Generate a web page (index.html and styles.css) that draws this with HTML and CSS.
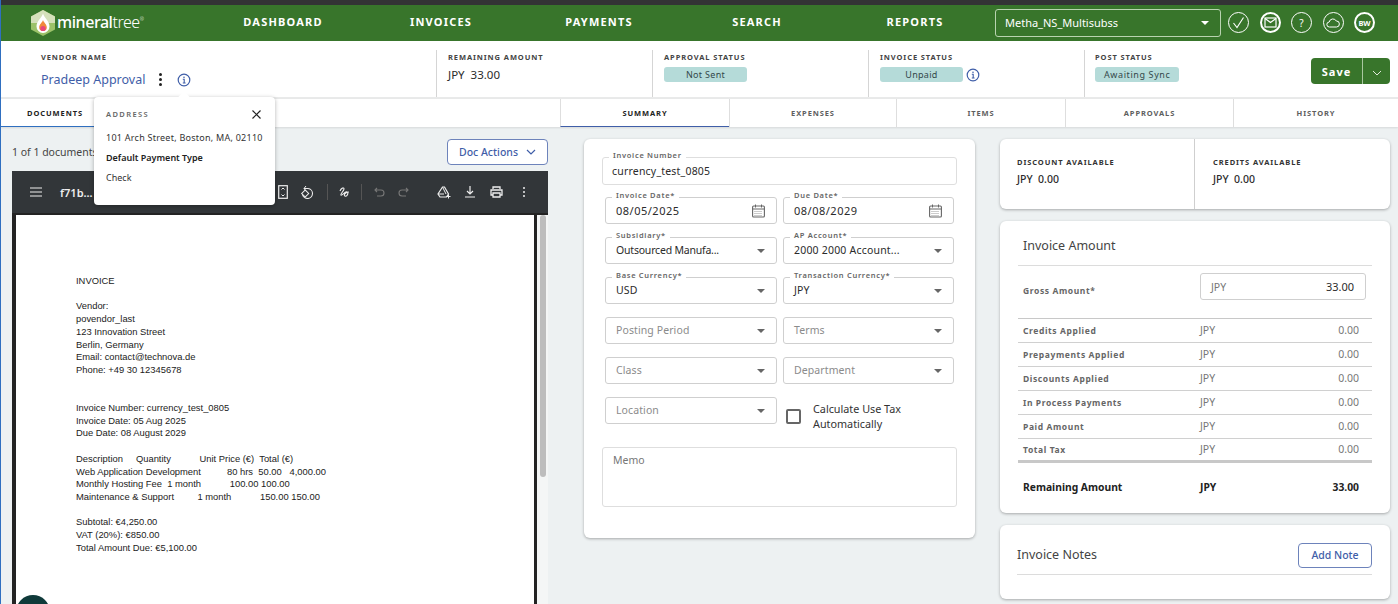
FILE: index.html
```html
<!DOCTYPE html>
<html lang="en">
<head>
    <meta charset="UTF-8">
    <meta name="viewport" content="width=device-width, initial-scale=1.0">
    <title>MineralTree Invoice</title>
    <link rel="stylesheet" href="styles.css">
</head>
<body>
    <div class="page">
        <div class="top-strip"></div>

        <div class="header">
            <div class="logo">
                <svg class="logo-mark" width="28" height="28" viewBox="0 0 28 28">
                    <path d="M14 1l12 6.5v13L14 27 2 20.5v-13z" fill="#9cc26a"/>
                    <path d="M14 1l12 6.5v6.5H2V7.5z" fill="#d5e0bb"/>
                    <path d="M14 4.5c1 4 6.5 7.5 6.5 13a6.5 6.5 0 0 1-13 0c0-5.5 5.5-9 6.5-13z" fill="#fff"/>
                    <path d="M14 11c.6 2.500 3.800 4.200 3.800 7.200a3.800 3.800 0 0 1-7.600 0c0-3 3.200-4.700 3.800-7.200z" fill="#f08a3c"/>
                    <circle cx="14" cy="19.5" r="2.600" fill="#e8467c"/>
                </svg>
                <span class="logo-text"><b>mineral</b>tree<sup>®</sup></span>
            </div>
            <nav class="nav">
                <a class="nav-item">DASHBOARD</a>
                <a class="nav-item">INVOICES</a>
                <a class="nav-item">PAYMENTS</a>
                <a class="nav-item">SEARCH</a>
                <a class="nav-item">REPORTS</a>
            </nav>
            <div class="org-select">
                <span>Metha_NS_Multisubss</span>
                <span class="caret caret-white"></span>
            </div>
            <div class="header-icons">
                <span class="round-icon">
                    <svg width="13" height="13" viewBox="0 0 13 13"><path d="M1.500 7l3.500 4.500L11.500 1.500" fill="none" stroke="#fff" stroke-width="1.100"/></svg>
                </span>
                <span class="round-icon round-icon-thick">
                    <svg width="13" height="11" viewBox="0 0 13 11"><rect x="1" y="1" width="11" height="9" fill="none" stroke="#fff" stroke-width="1.200"/><path d="M1 1.500l5.500 4 5.500-4" fill="none" stroke="#fff" stroke-width="1.200"/></svg>
                </span>
                <span class="round-icon">?</span>
                <span class="round-icon">
                    <svg width="14" height="10" viewBox="0 0 14 10"><path d="M3.500 9a2.500 2.500 0 0 1-.3-5A3.800 3.800 0 0 1 10.300 3a3 3 0 0 1 .2 6z" fill="none" stroke="#fff" stroke-width="1"/></svg>
                </span>
                <span class="round-icon round-icon-thick round-icon-text">BW</span>
            </div>
        </div>

        <div class="info-bar">
            <div class="info-vendor">
                <div class="info-label">VENDOR NAME</div>
                <div class="vendor-row">
                    <a class="vendor-link">Pradeep Approval</a>
                    <span class="kebab"><i></i><i></i><i></i></span>
                    <svg class="info-icon" width="14" height="14" viewBox="0 0 14 14"><circle cx="7" cy="7" r="5.800" fill="none" stroke="#3f5ea8" stroke-width="1.200"/><path d="M5.800 6.200H7.200V10M5.800 10h2.800" fill="none" stroke="#3f5ea8" stroke-width="1.100"/><circle cx="7" cy="4.200" r=".8" fill="#3f5ea8"/></svg>
                </div>
            </div>
            <div class="info-cell">
                <div class="info-label">REMAINING AMOUNT</div>
                <div class="info-value">JPY&nbsp; 33.00</div>
            </div>
            <div class="info-cell">
                <div class="info-label">APPROVAL STATUS</div>
                <div class="badge-row"><span class="badge badge-wide">Not Sent</span></div>
            </div>
            <div class="info-cell">
                <div class="info-label">INVOICE STATUS</div>
                <div class="badge-row">
                    <span class="badge badge-wide">Unpaid</span>
                    <svg class="info-icon" width="14" height="14" viewBox="0 0 14 14"><circle cx="7" cy="7" r="5.800" fill="none" stroke="#3f5ea8" stroke-width="1.200"/><path d="M5.800 6.200H7.200V10M5.800 10h2.800" fill="none" stroke="#3f5ea8" stroke-width="1.100"/><circle cx="7" cy="4.200" r=".8" fill="#3f5ea8"/></svg>
                </div>
            </div>
            <div class="info-cell info-cell-post">
                <div class="info-label">POST STATUS</div>
                <div class="badge-row"><span class="badge badge-post">Awaiting Sync</span></div>
            </div>
            <div class="save-group">
                <button class="save-btn">Save</button>
                <button class="save-more">
                    <svg width="10" height="6" viewBox="0 0 10 6"><path d="M1 1l4 4 4-4" fill="none" stroke="#dfe9da" stroke-width="1"/></svg>
                </button>
            </div>
        </div>

        <div class="tabs">
            <div class="tabs-left">
                <div class="tab tab-docs">DOCUMENTS</div>
            </div>
            <div class="tabs-right">
                <div class="tab tab-active">SUMMARY</div>
                <div class="tab">EXPENSES</div>
                <div class="tab">ITEMS</div>
                <div class="tab">APPROVALS</div>
                <div class="tab">HISTORY</div>
            </div>
        </div>

        <div class="main">
            <div class="doc-pane">
                <div class="doc-head">
                    <span class="doc-count">1 of 1 documents</span>
                    <button class="outline-btn doc-actions">Doc Actions
                        <svg width="10" height="6" viewBox="0 0 10 6"><path d="M1 1l4 4 4-4" fill="none" stroke="#3f5ea8" stroke-width="1.200"/></svg>
                    </button>
                </div>
                <div class="viewer">
                    <div class="viewer-bar">
                        <svg class="vb-menu" width="12" height="10" viewBox="0 0 12 10"><path d="M0 1h12M0 5h12M0 9h12" stroke="#eee" stroke-width="1.200"/></svg>
                        <span class="vb-title">f71b...</span>
                        <svg class="vb-fit" width="10" height="14" viewBox="0 0 10 14"><rect x=".7" y=".7" width="8.600" height="12.600" fill="none" stroke="#eee" stroke-width="1.200"/><path d="M3.500 4.500L5 3l1.500 1.500M3.500 9.500L5 11l1.500-1.500" fill="none" stroke="#eee"/></svg>
                        <svg class="vb-rotate" width="14" height="14" viewBox="0 0 14 14"><path d="M4 3.500h4a5 5 0 1 1-5.500 5" fill="none" stroke="#eee" stroke-width="1.100"/><path d="M6 1L4 3.500 6 6" fill="none" stroke="#eee"/><rect x="2.700" y="6" width="5" height="5" transform="rotate(45 5.200 8.500)" fill="#323639" stroke="#eee"/></svg>
                        <span class="vb-sep vb-sep-one"></span>
                        <svg class="vb-draw" width="12" height="13" viewBox="0 0 12 13"><path d="M1 5c1-3 4-4 4-2S1 8 2 9s4-4 6-3 0 5-2 4 1-4 4-4" fill="none" stroke="#eee" stroke-width="1.100"/></svg>
                        <span class="vb-sep vb-sep-two"></span>
                        <svg class="vb-undo" width="11" height="10" viewBox="0 0 11 10"><path d="M3 1L1 3l2 2M1 3h6a3 3 0 0 1 0 6H3" fill="none" stroke="#777" stroke-width="1.100"/></svg>
                        <svg class="vb-redo" width="11" height="10" viewBox="0 0 11 10"><path d="M8 1l2 2-2 2M10 3H4a3 3 0 0 0 0 6h4" fill="none" stroke="#777" stroke-width="1.100"/></svg>
                        <svg class="vb-drive" width="14" height="13" viewBox="0 0 14 13"><path d="M5.500 1h2l4 7-2 3H3L1 8z" fill="none" stroke="#eee" stroke-width="1.200"/><path d="M1 8h6M5.500 1L9 8" fill="none" stroke="#eee"/><path d="M9.500 10.500h4M11.500 8.500v4" stroke="#eee"/></svg>
                        <svg class="vb-down" width="10" height="12" viewBox="0 0 10 12"><path d="M5 0v8M2 5l3 3 3-3M0 11h10" fill="none" stroke="#eee" stroke-width="1.200"/></svg>
                        <svg class="vb-print" width="13" height="12" viewBox="0 0 13 12"><path d="M3 3V1h7v2M3 9H1V4h11v5h-2M3 7h7v4H3z" fill="none" stroke="#eee" stroke-width="1.300"/></svg>
                        <span class="vb-kebab"><i></i><i></i><i></i></span>
                    </div>
                    <div class="viewer-body">
                        <div class="pdf-page">
<div class="pdf-text">INVOICE

Vendor:
povendor_last
123 Innovation Street
Berlin, Germany
Email: contact@technova.de
Phone: +49 30 12345678


Invoice Number: currency_test_0805
Invoice Date: 05 Aug 2025
Due Date: 08 August 2029

Description     Quantity           Unit Price (€)  Total (€)
Web Application Development          80 hrs  50.00   4,000.00
Monthly Hosting Fee  1 month           100.00 100.00
Maintenance &amp; Support         1 month           150.00 150.00

Subtotal: €4,250.00
VAT (20%): €850.00
Total Amount Due: €5,100.00</div>
                        </div>
                        <div class="pdf-scroll"><div class="pdf-thumb"></div></div>
                    </div>
                </div>
            </div>

            <div class="form-col">
                <div class="card form-card">
                    <div class="field field-full">
                        <label class="field-label">Invoice Number</label>
                        <span class="field-value field-wide">currency_test_0805</span>
                    </div>
                    <div class="form-grid">
                        <div class="field">
                            <label class="field-label">Invoice Date*</label>
                            <span class="field-value field-date">08/05/2025</span>
                            <svg class="cal" width="13" height="14" viewBox="0 0 13 14"><rect x=".6" y="2" width="11.800" height="11" rx="1" fill="none" stroke="#666" stroke-width="1.100"/><path d="M.6 5h11.800M3.500 .5v3M9.500 .5v3" stroke="#666"/><path d="M2.500 7.500h8M2.500 9.500h8M2.500 11.500h8" stroke="#999" stroke-dasharray="1 1"/></svg>
                        </div>
                        <div class="field">
                            <label class="field-label">Due Date*</label>
                            <span class="field-value field-date">08/08/2029</span>
                            <svg class="cal" width="13" height="14" viewBox="0 0 13 14"><rect x=".6" y="2" width="11.800" height="11" rx="1" fill="none" stroke="#666" stroke-width="1.100"/><path d="M.6 5h11.800M3.500 .5v3M9.500 .5v3" stroke="#666"/><path d="M2.500 7.500h8M2.500 9.500h8M2.500 11.500h8" stroke="#999" stroke-dasharray="1 1"/></svg>
                        </div>
                        <div class="field">
                            <label class="field-label">Subsidiary*</label>
                            <span class="field-value field-tight">Outsourced Manufa...</span>
                            <span class="caret"></span>
                        </div>
                        <div class="field">
                            <label class="field-label">AP Account*</label>
                            <span class="field-value field-wide">2000 2000 Account...</span>
                            <span class="caret"></span>
                        </div>
                        <div class="field">
                            <label class="field-label">Base Currency*</label>
                            <span class="field-value">USD</span>
                            <span class="caret"></span>
                        </div>
                        <div class="field">
                            <label class="field-label">Transaction Currency*</label>
                            <span class="field-value">JPY</span>
                            <span class="caret"></span>
                        </div>
                        <div class="field">
                            <span class="field-value field-empty">Posting Period</span>
                            <span class="caret"></span>
                        </div>
                        <div class="field">
                            <span class="field-value field-empty">Terms</span>
                            <span class="caret"></span>
                        </div>
                        <div class="field">
                            <span class="field-value field-empty">Class</span>
                            <span class="caret"></span>
                        </div>
                        <div class="field">
                            <span class="field-value field-empty">Department</span>
                            <span class="caret"></span>
                        </div>
                        <div class="field">
                            <span class="field-value field-empty">Location</span>
                            <span class="caret"></span>
                        </div>
                        <div class="tax-check">
                            <span class="checkbox"></span>
                            <span class="tax-label">Calculate Use Tax Automatically</span>
                        </div>
                    </div>
                    <div class="memo">Memo</div>
                </div>
            </div>

            <div class="side-col">
                <div class="card avail-card">
                    <div class="avail-cell">
                        <div class="avail-label">DISCOUNT AVAILABLE</div>
                        <div class="avail-value">JPY&nbsp; 0.00</div>
                    </div>
                    <div class="avail-cell avail-cell-second">
                        <div class="avail-label">CREDITS AVAILABLE</div>
                        <div class="avail-value">JPY&nbsp; 0.00</div>
                    </div>
                </div>

                <div class="card amount-card">
                    <h3 class="amount-title">Invoice Amount</h3>
                    <div class="gross-row">
                        <span class="row-label">Gross Amount*</span>
                        <div class="gross-input"><span>JPY</span><b>33.00</b></div>
                    </div>
                    <div class="amount-row">
                        <span class="row-label">Credits Applied</span><span class="row-cur">JPY</span><span class="row-val">0.00</span>
                    </div>
                    <div class="amount-row">
                        <span class="row-label">Prepayments Applied</span><span class="row-cur">JPY</span><span class="row-val">0.00</span>
                    </div>
                    <div class="amount-row">
                        <span class="row-label">Discounts Applied</span><span class="row-cur">JPY</span><span class="row-val">0.00</span>
                    </div>
                    <div class="amount-row">
                        <span class="row-label">In Process Payments</span><span class="row-cur">JPY</span><span class="row-val">0.00</span>
                    </div>
                    <div class="amount-row">
                        <span class="row-label">Paid Amount</span><span class="row-cur">JPY</span><span class="row-val">0.00</span>
                    </div>
                    <div class="amount-row">
                        <span class="row-label">Total Tax</span><span class="row-cur">JPY</span><span class="row-val">0.00</span>
                    </div>
                    <div class="amount-row amount-total">
                        <span>Remaining Amount</span><span class="row-cur">JPY</span><span class="row-val">33.00</span>
                    </div>
                </div>

                <div class="card notes-card">
                    <div class="notes-head">
                        <span class="notes-title">Invoice Notes</span>
                        <button class="outline-btn add-note">Add Note</button>
                    </div>
                </div>
            </div>
        </div>

        <!-- vendor popover -->
        <div class="popover">
            <div class="popover-head">
                <span class="popover-title">ADDRESS</span>
                <svg width="9" height="9" viewBox="0 0 9 9"><path d="M.5 .5l8 8M8.500 .5l-8 8" stroke="#222" stroke-width="1.200"/></svg>
            </div>
            <p class="popover-address">101 Arch Street, Boston, MA, 02110</p>
            <p class="popover-strong">Default Payment Type</p>
            <p>Check</p>
        </div>

        <div class="chat-bubble"></div>
    </div>
</body>
</html>
```

FILE: styles.css
```css
* {
    box-sizing: border-box;
}
html, body {
    height: 100%;
    margin: 0;
    overflow: hidden;
}
body {
    font-family: 'Noto Sans', 'Open Sans', sans-serif;
    color: #2b2b2b;
    background: #edf1f2;
}
button {
    font-family: inherit;
    cursor: pointer;
}
.page {
    position: relative;
    height: 100vh;
    display: flex;
    flex-direction: column;
    border-left: 1px solid #2f6fc0;
    overflow: hidden;
}
.top-strip {
    height: 5px;
    background: #333335;
    flex-shrink: 0;
}

/* header */
.header {
    height: 36px;
    flex-shrink: 0;
    display: flex;
    align-items: center;
    background: #38752b;
    color: white;
}
.logo {
    width: 203px;
    padding-left: 28px;
    display: flex;
    align-items: center;
    gap: 0;
}
.logo-text {
    font-size: 16px;
    font-weight: 300;
    letter-spacing: -0.45px;
    margin-top: -2px;
}
.logo-text b {
    font-weight: 500;
}
.logo-text sup {
    font-size: 5px;
    vertical-align: 7px;
    line-height: 0;
}
.nav {
    width: 791px;
    margin-top: -3px;
    display: grid;
    grid-template-columns: repeat(5, 158px);
}
.nav-item {
    text-align: center;
    font-size: 11px;
    font-weight: 700;
    letter-spacing: 1.2px;
}
.org-select {
    width: 226px;
    height: 28px;
    margin-top: -1px;
    padding: 0 11px 0 9px;
    display: flex;
    align-items: center;
    justify-content: space-between;
    border: 1px solid #b9d3b0;
    border-radius: 3px;
    font-size: 11px;
}
.caret {
    width: 0;
    height: 0;
    border-left: 4px solid transparent;
    border-right: 4px solid transparent;
    border-top: 4px solid #666;
}
.caret-white {
    border-top-color: white;
}
.header-icons {
    display: flex;
    gap: 10.5px;
    margin-left: 7px;
    margin-top: -1px;
}
.round-icon {
    width: 21px;
    height: 21px;
    display: flex;
    align-items: center;
    justify-content: center;
    border: 1px solid white;
    border-radius: 50%;
    font-size: 10px;
}
.round-icon-thick {
    border-width: 2px;
}
.round-icon-text {
    font-size: 7.5px;
    font-weight: 700;
}

/* info bar */
.info-bar {
    height: 58px;
    flex-shrink: 0;
    display: flex;
    align-items: stretch;
    background: white;
    padding-top: 9px;
    border-bottom: 2px solid #e9eaea;
}
.info-label {
    font-size: 7.5px;
    font-weight: 700;
    letter-spacing: 0.9px;
    color: #444;
}
.info-vendor {
    width: 435px;
    padding: 2px 0 0 40px;
}
.vendor-row {
    display: flex;
    align-items: center;
    margin-top: 9px;
}
.vendor-link {
    width: 103px;
    font-size: 12.5px;
    color: #3f5ea8;
    white-space: nowrap;
}
.kebab {
    margin-left: 15px;
    display: flex;
    flex-direction: column;
    gap: 2px;
}
.kebab i, .vb-kebab i {
    display: block;
    width: 3px;
    height: 3px;
    border-radius: 50%;
    background: #222;
}
.info-vendor .info-icon {
    margin-left: 15px;
}
.info-cell {
    width: 216px;
    padding: 2px 0 0 11px;
    border-left: 1px solid #d5d5d5;
}
.info-value {
    font-size: 11.5px;
    margin-top: 5px;
}
.badge-row {
    display: flex;
    align-items: center;
    gap: 3px;
    margin-top: 5px;
}
.badge {
    height: 15px;
    padding: 0 9px;
    display: inline-flex;
    align-items: center;
    justify-content: center;
    background: #b5dbd9;
    border-radius: 3px;
    font-size: 9px;
    letter-spacing: 0.3px;
    color: #33484a;
}
.badge-wide {
    width: 83px;
}
.badge-post {
    letter-spacing: 0.6px;
}
.info-cell-post {
    width: 227px;
    padding-left: 10px;
}
.save-group {
    height: 26px;
    margin-top: 8px;
    display: flex;
    background: #38752b;
    border-radius: 4px;
}
.save-btn {
    width: 52px;
    border: none;
    border-right: 1px solid #a9c7a0;
    background: none;
    color: white;
    font-size: 11px;
    font-weight: 700;
    letter-spacing: 1px;
}
.save-more {
    width: 27px;
    border: none;
    background: none;
    padding: 0;
}

/* tabs */
.tabs {
    height: 28px;
    flex-shrink: 0;
    display: flex;
    background: white;
    box-shadow: 0 1px 2px rgba(0,0,0,0.1);
    position: relative;
}
.tab {
    display: flex;
    align-items: center;
    justify-content: center;
    font-size: 7.5px;
    font-weight: 700;
    letter-spacing: 0.9px;
    color: #5e5e5e;
    border-left: 1px solid #dedede;
    flex: 1;
}
.tabs-left {
    width: 559px;
    display: flex;
}
.tab-docs {
    flex: none;
    width: 108px;
    color: #222;
    border-left: none;
    border-bottom: 1px solid #2f6fc0;
}
.tabs-right {
    width: 838px;
    display: grid;
    grid-template-columns: 169px 167px 169px 168px 165px;
}
.tab-active {
    color: #222;
    border-bottom: 1px solid #3f5ea8;
}

/* main area */
.main {
    flex: 1;
    min-height: 0;
    display: flex;
    gap: 25px;
}
.doc-pane {
    width: 559px;
    margin-right: -1px;
    padding: 12px 12px 0 11px;
    display: flex;
    flex-direction: column;
}
.doc-head {
    height: 32px;
    flex-shrink: 0;
    display: flex;
    justify-content: space-between;
}
.doc-count {
    font-size: 10.5px;
    margin-top: 6px;
    color: #444;
}
.outline-btn {
    background: white;
    border: 1px solid #6d83bb;
    border-radius: 4px;
    color: #3f5ea8;
    font-size: 10.5px;
    font-weight: 500;
}
.doc-actions {
    width: 101px;
    height: 26px;
    display: flex;
    align-items: center;
    justify-content: center;
    gap: 8px;
    padding: 0;
}
.viewer {
    flex: 1;
    display: flex;
    flex-direction: column;
    min-height: 0;
    background: #2a2a2a;
}
.viewer-bar {
    height: 42px;
    flex-shrink: 0;
    display: flex;
    align-items: center;
    background: #323639;
    color: #eee;
}
.vb-menu { margin-left: 18px; }
.vb-title {
    width: 218px;
    margin-left: 18px;
    font-size: 11px;
    font-weight: 600;
}
.vb-rotate { margin-left: 12px; }
.vb-sep {
    width: 1px;
    height: 16px;
    background: #555;
}
.vb-sep-one { margin-left: 13px; }
.vb-draw { margin-left: 11px; }
.vb-sep-two { margin-left: 10px; }
.vb-undo { margin-left: 12px; }
.vb-redo { margin-left: 13px; }
.vb-drive { margin-left: 28px; }
.vb-down { margin-left: 14px; }
.vb-print { margin-left: 15px; }
.vb-kebab {
    margin-left: 20px;
    display: flex;
    flex-direction: column;
    gap: 2px;
}
.vb-kebab i {
    width: 2px;
    height: 2px;
    background: #eee;
}
.viewer-body {
    flex: 1;
    min-height: 0;
    display: flex;
    padding-top: 2px;
    padding-left: 4px;
    background: #232323;
}
.pdf-page {
    flex: 1;
    background: white;
    padding-top: 60px;
    padding-left: 60px;
    margin-right: 3px;
}
.pdf-text {
    font-family: 'Liberation Sans', Arial, sans-serif;
    font-size: 9.4px;
    line-height: 12.7px;
    white-space: pre;
    color: #222;
}
.pdf-scroll {
    width: 11px;
    background: #f4f6f6;
    padding: 0 2px 0 3px;
}
.pdf-thumb {
    height: 262px;
    background: #bdbdbd;
    border-radius: 3px;
}

/* cards */
.card {
    background: white;
    border-radius: 6px;
    box-shadow: 0 1px 3px rgba(0,0,0,0.3);
}
.form-col {
    width: 391px;
    padding-top: 12px;
}
.form-card {
    height: 399px;
    padding: 18px 18px 0;
}
.field {
    position: relative;
    height: 27px;
    display: flex;
    align-items: center;
    justify-content: space-between;
    padding: 0 11px 0 10px;
    border: 1px solid #cfcfcf;
    border-radius: 3px;
}
.field-full {
    height: 28px;
    padding: 0 9px;
    border-color: #dedede;
}
.field-label {
    position: absolute;
    top: -8px;
    left: 6px;
    padding: 0 4px;
    background: white;
    font-size: 7.5px;
    font-weight: 600;
    letter-spacing: 0.7px;
    line-height: 10px;
    color: #666;
    white-space: nowrap;
}
.field-value {
    font-size: 10.5px;
    letter-spacing: 0.1px;
    color: #2b2b2b;
    white-space: nowrap;
    margin-top: -1px;
}
.field-wide {
    letter-spacing: 0.2px;
}
.field-tight {
    letter-spacing: -0.2px;
}
.field-date {
    font-size: 11px;
    letter-spacing: 0.5px;
}
.field-empty {
    color: #8b8b8b;
}
.form-grid {
    margin-top: 12px;
    padding: 0 3px;
    display: grid;
    grid-template-columns: 172px 171px;
    column-gap: 6px;
    row-gap: 13px;
}
.tax-check {
    display: flex;
    align-items: center;
    padding-left: 3px;
    height: 32px;
}
.checkbox {
    width: 15px;
    height: 15px;
    margin-top: 6px;
    border: 2px solid #666;
    border-radius: 2px;
    flex-shrink: 0;
}
.tax-label {
    width: 112px;
    margin-left: 12px;
    font-size: 10.8px;
    line-height: 15px;
    color: #333;
    margin-top: 5px;
}
.memo {
    height: 60px;
    margin-top: 18px;
    padding: 5px 10px;
    border: 1px solid #dedede;
    border-radius: 3px;
    font-size: 10.5px;
    color: #777;
}

/* right column */
.side-col {
    width: 390px;
    padding-top: 12px;
    display: flex;
    flex-direction: column;
    gap: 12px;
}
.avail-card {
    height: 70px;
    display: flex;
}
.avail-cell {
    width: 194px;
    padding: 18px 0 0 17px;
}
.avail-cell-second {
    flex: 1;
    padding-left: 18px;
    border-left: 1px solid #cfcfcf;
}
.avail-label {
    font-size: 7.5px;
    font-weight: 700;
    letter-spacing: 0.9px;
    color: #333;
}
.avail-value {
    margin-top: 5px;
    font-size: 10.5px;
    font-weight: 500;
}
.amount-card {
    height: 292px;
    padding: 0 18px;
}
.amount-title {
    height: 45px;
    margin: 0;
    padding: 16px 0 0 5px;
    border-bottom: 1px solid #dcdcdc;
    font-size: 12.5px;
    font-weight: 400;
    color: #444;
}
.gross-row {
    height: 53px;
    display: grid;
    grid-template-columns: 177px 166px;
    align-items: center;
    padding-left: 5px;
    border-bottom: 1px solid #c8c8c8;
}
.gross-row .row-label {
    margin-top: -3px;
}
.gross-input {
    height: 27px;
    margin-top: -11px;
    padding: 0 11px 0 10px;
    display: flex;
    justify-content: space-between;
    align-items: center;
    border: 1px solid #cfcfcf;
    border-radius: 3px;
    font-size: 10.5px;
    color: #777;
}
.gross-input b {
    font-weight: 400;
    font-size: 11px;
    color: #2b2b2b;
}
.row-label {
    font-size: 8.5px;
    font-weight: 700;
    letter-spacing: 0.6px;
    color: #666;
}
.amount-row {
    height: 24px;
    display: grid;
    grid-template-columns: 177px 60px 99px;
    align-items: center;
    padding-left: 5px;
    padding-bottom: 1px;
    border-bottom: 1px solid #d0d0d0;
    font-size: 10.5px;
}
.row-cur {
    color: #777;
}
.row-val {
    text-align: right;
    color: #777;
}
.amount-row:nth-last-child(2) {
    border-bottom: 3px solid #c8c8c8;
}
.amount-total {
    height: 48px;
    border-bottom: none;
    font-size: 10.3px;
    font-weight: 700;
    color: #222;
}
.amount-total .row-cur, .amount-total .row-val {
    color: #222;
}
.notes-card {
    height: 74px;
    padding: 0 18px 0 17px;
}
.notes-head {
    height: 50px;
    display: flex;
    align-items: flex-start;
    justify-content: space-between;
    border-bottom: 1px solid #dcdcdc;
    padding-top: 18px;
}
.notes-title {
    margin-top: 3px;
    font-size: 12.5px;
    color: #444;
}
.add-note {
    width: 74px;
    height: 25px;
    padding: 0 0 2px;
}

/* floats over the tabs and the viewer */
.popover {
    position: absolute;
    left: 93px;
    top: 97px;
    width: 181px;
    height: 108px;
    padding: 12px 12px 0;
    background: white;
    border-radius: 4px;
    box-shadow: 0 1px 4px rgba(0,0,0,0.3);
    font-size: 9px;
    color: #333;
}
.popover::before {
    content: "";
    position: absolute;
    top: -4px;
    left: 86px;
    width: 8px;
    height: 8px;
    background: white;
    transform: rotate(45deg);
}
.popover p {
    margin: 0 0 10px;
    line-height: 10px;
    white-space: nowrap;
}
.popover-address {
    letter-spacing: 0.25px;
}
.popover-head {
    display: flex;
    justify-content: space-between;
    align-items: center;
    margin-bottom: 14px;
    padding-right: 2px;
}
.popover-title {
    font-size: 7.5px;
    font-weight: 600;
    letter-spacing: 1.4px;
    color: #666;
}
.popover-strong {
    font-weight: 600;
    color: #222;
}
.chat-bubble {
    position: absolute;
    left: 15px;
    top: 595px;
    width: 34px;
    height: 34px;
    border-radius: 50%;
    background: #0f3a3a;
}
```
